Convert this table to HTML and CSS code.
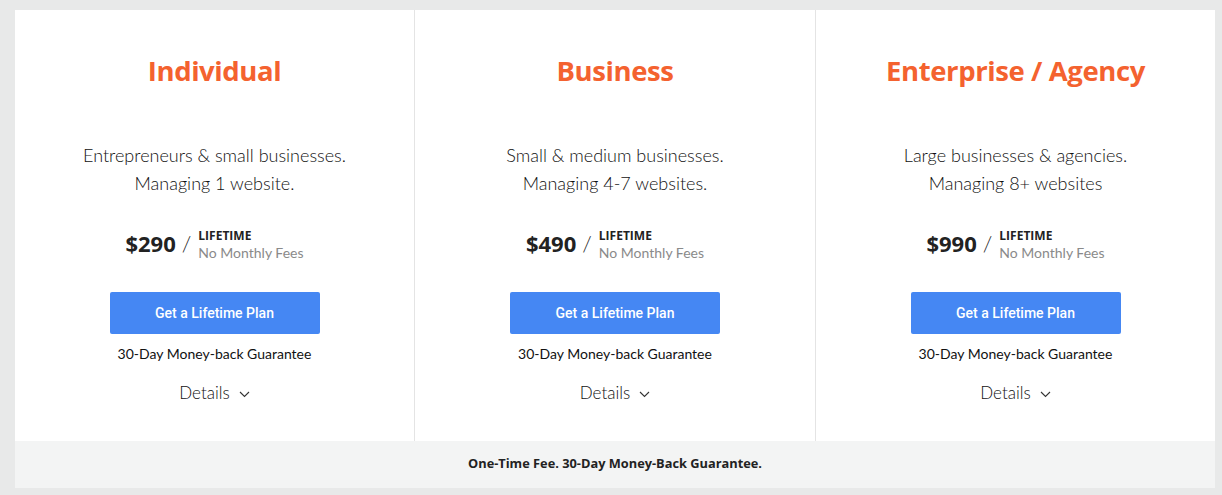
FILE: index.html
```html
<!DOCTYPE html>
<html lang="en">
<head>
<meta charset="utf-8">
<title>Pricing</title>
<link rel="stylesheet" href="styles.css">
</head>
<body>
<div class="pricing">
  <div class="plans">
    <div class="plan">
      <h2 class="plan-title">Individual</h2>
      <p class="plan-desc">Entrepreneurs &amp; small businesses.<br>Managing 1 website.</p>
      <div class="price">
        <span class="amount">$290</span>
        <span class="slash">/</span>
        <span class="term"><span class="term-main">LIFETIME</span><span class="term-sub">No Monthly Fees</span></span>
      </div>
      <a class="btn" href="#">Get a Lifetime Plan</a>
      <p class="guarantee">30-Day Money-back Guarantee</p>
      <div class="details">Details <svg class="chev" width="11" height="7" viewBox="0 0 11 7"><path d="M1 1l4.5 4.5L10 1" fill="none" stroke="#333" stroke-width="1.1"/></svg></div>
    </div>
    <div class="plan">
      <h2 class="plan-title">Business</h2>
      <p class="plan-desc">Small &amp; medium businesses.<br>Managing 4-7 websites.</p>
      <div class="price">
        <span class="amount">$490</span>
        <span class="slash">/</span>
        <span class="term"><span class="term-main">LIFETIME</span><span class="term-sub">No Monthly Fees</span></span>
      </div>
      <a class="btn" href="#">Get a Lifetime Plan</a>
      <p class="guarantee">30-Day Money-back Guarantee</p>
      <div class="details">Details <svg class="chev" width="11" height="7" viewBox="0 0 11 7"><path d="M1 1l4.5 4.5L10 1" fill="none" stroke="#333" stroke-width="1.1"/></svg></div>
    </div>
    <div class="plan">
      <h2 class="plan-title">Enterprise / Agency</h2>
      <p class="plan-desc">Large businesses &amp; agencies.<br>Managing 8+ websites</p>
      <div class="price">
        <span class="amount">$990</span>
        <span class="slash">/</span>
        <span class="term"><span class="term-main">LIFETIME</span><span class="term-sub">No Monthly Fees</span></span>
      </div>
      <a class="btn" href="#">Get a Lifetime Plan</a>
      <p class="guarantee">30-Day Money-back Guarantee</p>
      <div class="details">Details <svg class="chev" width="11" height="7" viewBox="0 0 11 7"><path d="M1 1l4.5 4.5L10 1" fill="none" stroke="#333" stroke-width="1.1"/></svg></div>
    </div>
  </div>
  <div class="footer">One-Time Fee. 30-Day Money-Back Guarantee.</div>
</div>
</body>
</html>
```
FILE: styles.css
```css
* { box-sizing: border-box; }
html, body { margin: 0; padding: 0; }
body {
  background: #e8e9e9;
  font-family: "Lato", "Open Sans", sans-serif;
  color: #222;
  width: 1222px;
  height: 495px;
  overflow: hidden;
}
.pricing {
  width: 1200px;
  margin: 10px 0 0 15px;
}
.plans {
  display: grid;
  grid-template-columns: 400px 401px 399px;
  background: #fff;
  height: 431px;
}
.plan {
  display: flex;
  flex-direction: column;
  align-items: center;
  padding-top: 43px;
  border-right: 1px solid #e4e4e4;
}
.plan:last-child { border-right: none; }
.plan-title {
  margin: 0;
  font-family: "Open Sans", sans-serif;
  font-weight: 700;
  font-size: 27.5px;
  line-height: 36px;
  color: #f4622f;
  letter-spacing: -0.4px;
}
.plan-desc {
  margin: 52px 0 0;
  text-align: center;
  font-weight: 300;
  font-size: 18px;
  line-height: 28px;
  color: #111;
}
.price {
  margin-top: 29px;
  display: flex;
  align-items: center;
  height: 34px;
}
.amount {
  font-family: "Open Sans", sans-serif;
  font-weight: 700;
  font-size: 22px;
  color: #222;
}
.slash {
  font-weight: 300;
  font-size: 22px;
  margin: 0 7px 0 6px;
  color: #222;
}
.term {
  display: flex;
  flex-direction: column;
  line-height: 17px;
  padding-top: 2px;
}
.term-main {
  font-family: "Open Sans", sans-serif;
  font-weight: 700;
  font-size: 12px;
  color: #222;
}
.term-sub {
  font-size: 14px;
  color: #8a8a8a;
  font-weight: 400;
}
.btn {
  margin-top: 32px;
  width: 210px;
  height: 42px;
  display: flex;
  align-items: center;
  justify-content: center;
  background: #4587f3;
  border-radius: 2px;
  color: #fff;
  text-decoration: none;
  font-family: "Roboto", sans-serif;
  font-weight: 500;
  font-size: 14px;
}
.guarantee {
  margin: 11px 0 0;
  font-size: 14px;
  line-height: 18px;
  color: #111;
}
.details {
  margin-top: 18px;
  font-size: 17px;
  line-height: 24px;
  font-weight: 300;
  color: #111;
  display: flex;
  align-items: center;
  gap: 9px;
}
.chev { margin-top: 2px; }
.footer {
  height: 47px;
  padding-bottom: 3px;
  background: #f3f4f4;
  display: flex;
  align-items: center;
  justify-content: center;
  font-family: "Open Sans", sans-serif;
  font-weight: 700;
  font-size: 12.8px;
  color: #222;
}
```
